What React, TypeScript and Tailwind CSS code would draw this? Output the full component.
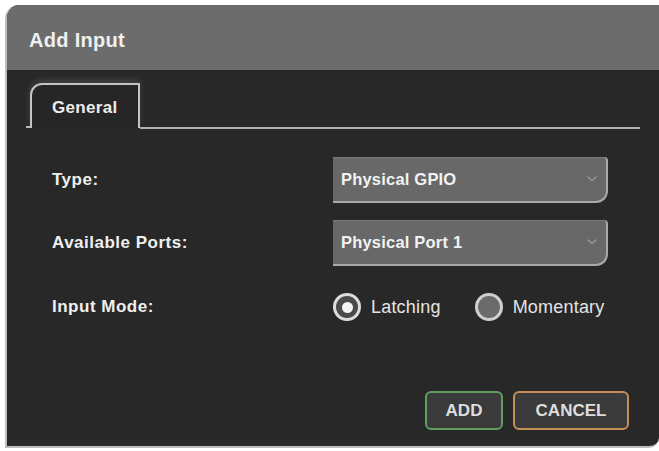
const font = { fontFamily: '"Liberation Sans", Arial, sans-serif' };

function Chevron() {
  return (
    <svg width="10" height="6" viewBox="0 0 10 6" className="shrink-0">
      <path d="M1 1l4 3.5L9 1" fill="none" stroke="#9a9a9a" strokeWidth="1.2" strokeLinecap="round" />
    </svg>
  );
}

function Select({ value }: { value: string }) {
  return (
    <div className="flex h-[46px] w-[275px] items-center justify-between rounded-tr-[4px] rounded-br-[12px] border-r-2 border-b-2 border-[#a9a9a9] bg-[#686868] pl-[8px] pr-[9px] shadow-[inset_0_1px_0_#7a7a7a]">
      <span className="text-[16.5px] font-bold tracking-[0.2px] text-[#f2f2f2]">{value}</span>
      <Chevron />
    </div>
  );
}

function Radio({ checked, label }: { checked?: boolean; label: string }) {
  return (
    <div className="flex items-center gap-[10px]">
      <div
        className={
          checked
            ? 'flex h-[28px] w-[28px] items-center justify-center rounded-full border-[3px] border-[#dcdcdc] bg-[#4a4a4a]'
            : 'h-[28px] w-[28px] rounded-full border-[3px] border-[#cfcfcf] bg-[#6b6b6b]'
        }
      >
        {checked && <div className="h-[11px] w-[11px] rounded-full bg-[#f4f4f4]" />}
      </div>
      <span className="text-[18px] tracking-[0.2px] text-[#e4e4e4]">{label}</span>
    </div>
  );
}

export default function App() {
  return (
    <div className="h-[451px] w-[659px] overflow-hidden bg-white pl-[5px] pt-[5px]" style={font}>
      <div className="flex h-[443px] w-[654px] flex-col overflow-hidden rounded-tl-[14px] rounded-br-[10px] border-l-[2px] border-b-[2px] border-[#bdbdbd] bg-[#282828]">
        <div className="flex h-[65px] shrink-0 items-center bg-[#6c6c6c] pl-[22px] pt-[5px]">
          <h1 className="text-[20px] font-bold tracking-[0.3px] text-[#f0f0f0]">Add Input</h1>
        </div>

        <div className="mt-[13px] flex items-end pl-[19px] pr-[19px]">
          <div className="h-[2px] w-[4px] bg-[#b8b8b8]" />
          <div className="flex h-[45px] w-[110px] items-center rounded-tl-[12px] border-x-2 border-t-2 border-[#c4c4c4] bg-[#262626] pl-[20px] pt-[3px] shadow-[0_-3px_6px_rgba(255,255,255,0.12)]">
            <span className="text-[17px] font-bold tracking-[0.3px] text-[#ececec]">General</span>
          </div>
          <div className="mb-[-1px] h-[2px] flex-1 bg-[#b0b0b0]" />
        </div>

        <div className="mt-[29px] grid grid-cols-[281px_275px] items-center gap-y-[17px] pl-[45px]">
          <span className="text-[17px] font-bold tracking-[0.5px] text-[#efefef]">Type:</span>
          <Select value="Physical GPIO" />
          <span className="text-[17px] font-bold tracking-[0.5px] text-[#efefef]">Available Ports:</span>
          <Select value="Physical Port 1" />
          <span className="mt-[10px] text-[17px] font-bold tracking-[0.5px] text-[#efefef]">Input Mode:</span>
          <div className="mt-[10px] flex items-center gap-[34px]">
            <Radio checked label="Latching" />
            <Radio label="Momentary" />
          </div>
        </div>

        <div className="mt-[70px] flex gap-[10px] pl-[418px]">
          <button className="h-[39px] w-[78px] rounded-[6px] border-2 border-[#5f9e5c] bg-[#3b3b3b] text-[17px] font-bold text-[#dedede]">
            ADD
          </button>
          <button className="h-[39px] w-[116px] rounded-[6px] border-2 border-[#c49057] bg-[#3b3b3b] text-[17px] font-bold text-[#dedede]">
            CANCEL
          </button>
        </div>
      </div>
    </div>
  );
}
